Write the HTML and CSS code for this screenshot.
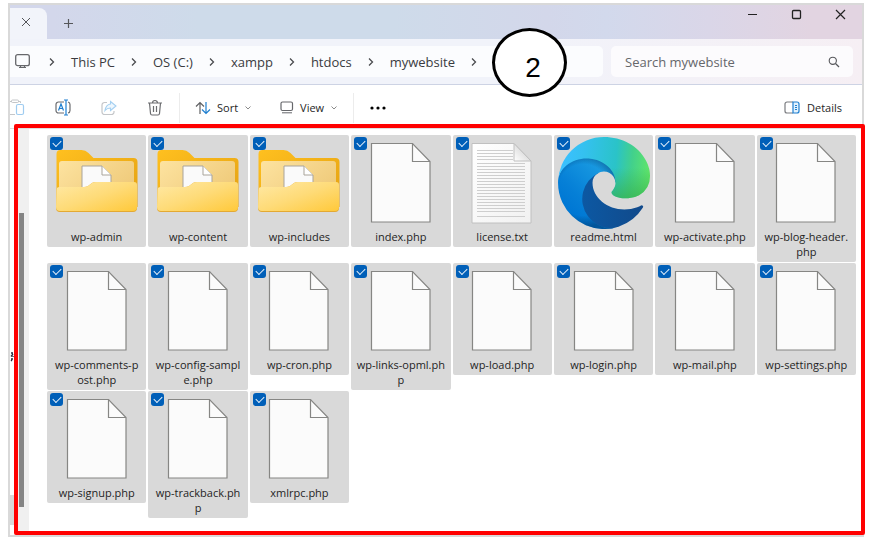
FILE: index.html
```html
<!DOCTYPE html>
<html lang="en">
<head>
<meta charset="utf-8">
<title>mywebsite</title>
<link rel="stylesheet" href="styles.css">
</head>
<body>
<svg class="defs" width="0" height="0" aria-hidden="true">
  <defs>
    <linearGradient id="gBack" x1="0" y1="0" x2="1" y2="1"><stop offset="0" stop-color="#ffc01f"/><stop offset="1" stop-color="#e3a012"/></linearGradient>
    <linearGradient id="gInner" x1="0" y1="0" x2="1" y2="0.6"><stop offset="0" stop-color="#fde3a0"/><stop offset="1" stop-color="#efca7a"/></linearGradient>
    <linearGradient id="gFront" x1="0" y1="0" x2="1" y2="1"><stop offset="0" stop-color="#ffe9a6"/><stop offset="0.5" stop-color="#fedb78"/><stop offset="1" stop-color="#ffc93a"/></linearGradient>
    <linearGradient id="gText" x1="0" y1="0" x2="1" y2="1"><stop offset="0" stop-color="#ffffff"/><stop offset="1" stop-color="#f1f1f1"/></linearGradient>
    <linearGradient id="gFold" x1="0" y1="1" x2="1" y2="0"><stop offset="0" stop-color="#ffffff"/><stop offset="0.6" stop-color="#dcdcdc"/></linearGradient>
    <linearGradient id="eDeep" gradientUnits="userSpaceOnUse" x1="63" y1="178" x2="241" y2="178"><stop offset="0" stop-color="#0c59a4"/><stop offset="1" stop-color="#114a8b"/></linearGradient>
    <linearGradient id="eBlue" gradientUnits="userSpaceOnUse" x1="150" y1="100" x2="46" y2="212"><stop offset="0" stop-color="#1b9de2"/><stop offset="0.2" stop-color="#1595df"/><stop offset="0.7" stop-color="#0680d7"/><stop offset="1" stop-color="#0078d4"/></linearGradient>
    <radialGradient id="eShade" gradientUnits="userSpaceOnUse" cx="75" cy="152" r="102"><stop offset="0.7" stop-color="#003060" stop-opacity="0"/><stop offset="1" stop-color="#003060" stop-opacity="0.5"/></radialGradient>
    <linearGradient id="eTop" gradientUnits="userSpaceOnUse" x1="15" y1="90" x2="262" y2="110"><stop offset="0" stop-color="#3bc0ff"/><stop offset="0.25" stop-color="#34c1ee"/><stop offset="0.6" stop-color="#2ac3c8"/><stop offset="0.78" stop-color="#42d08c"/><stop offset="1" stop-color="#62e768"/></linearGradient>
    <linearGradient id="eGreen" gradientUnits="userSpaceOnUse" x1="200" y1="90" x2="200" y2="176"><stop offset="0" stop-color="#36b04a" stop-opacity="0"/><stop offset="1" stop-color="#36b04a" stop-opacity="0.7"/></linearGradient>
  </defs>
  <symbol id="folder" viewBox="0 0 92 92">
    <path d="M5.500 17q0-4 4-4h21q4 0 7 3l5 5h40q4 0 4 4v45H5.500z" fill="url(#gBack)"/>
    <path d="M8 27q0-3 3-3h69q3 0 3 3v36H8z" fill="url(#gInner)"/>
    <path d="M31 29h20l9 9v20H31z" fill="#fafafa" stroke="#a9a49b" stroke-width="1"/>
    <path d="M51 29v9h9" fill="#fff" stroke="#a9a49b" stroke-width="1"/>
    <path d="M5.500 53q0-3 3-3H33q2 0 4-1l4-3q1-1 4-1h38q3 0 3 3v23q0 4-4 4h-73q-4 0-4-4z" fill="#e3a933"/>
    <path d="M5.500 53q0-3 3-3H33q2 0 4-1l4-3q1-1 4-1h38q3 0 3 3v22q0 4-4 4h-73q-4 0-4-4z" fill="url(#gFront)"/>
  </symbol>
  <symbol id="file" viewBox="0 0 92 92">
    <path d="M16.500 6.500h41l17.500 18v60.500h-58.500z" fill="#fbfbfb" stroke="#868684" stroke-width="1.200"/>
    <path d="M57.500 6.500v18H75" fill="none" stroke="#868684" stroke-width="1.200"/>
  </symbol>
  <symbol id="text" viewBox="0 0 92 92">
    <path d="M16 6.500h42l17 17.500v62H16z" fill="url(#gText)" stroke="#c0c0c0" stroke-width="1"/>
    <path d="M21 13.500h36M21 16.500h36M21 19.500h36M21 22.500h36M21 26.500h48M21 29.500h48M21 32.500h48M21 35.500h48M21 38.500h48M21 41.500h48M21 44.500h48M21 47.500h48M21 50.500h48M21 53.500h48M21 56.500h48M21 59.500h48M21 62.500h48M21 65.500h48M21 68.500h48M21 71.500h48M21 74.500h48M21 79.500h48" stroke="#cecece" stroke-width="1"/>
    <path d="M58 6.500V24h17z" fill="url(#gFold)" stroke="#c0c0c0" stroke-width="1"/>
  </symbol>
  <symbol id="edge" viewBox="0 0 256 256">
    <g transform="translate(-4.630 -4.920)">
      <path d="M235.680 195.460a93.730 93.730 0 0 1-10.540 4.710 101.870 101.870 0 0 1-35.900 6.460c-47.320 0-88.540-32.550-88.540-74.320A31.480 31.480 0 0 1 117.130 105c-42.800 1.800-53.800 46.400-53.800 72.530 0 73.880 68.090 81.370 82.760 81.370 7.910 0 19.840-2.300 27-4.560l1.310-.44a128.340 128.340 0 0 0 66.600-52.800 4 4 0 0 0-5.320-5.640z" fill="url(#eDeep)"/>
      <path d="M110.340 246.340A79.200 79.200 0 0 1 87.600 225a80.720 80.720 0 0 1 29.530-120c3.120-1.470 8.450-4.130 15.540-4a32.350 32.350 0 0 1 25.690 13 31.880 31.880 0 0 1 6.360 18.660c0-.21 24.460-79.600-80-79.600-43.900 0-80 41.660-80 78.210a130.150 130.150 0 0 0 12.110 56 128 128 0 0 0 156.380 67.110 75.550 75.550 0 0 1-62.780-8z" fill="url(#eBlue)"/>
      <path d="M110.340 246.340A79.200 79.200 0 0 1 87.600 225a80.720 80.720 0 0 1 29.530-120c3.120-1.470 8.450-4.130 15.540-4a32.350 32.350 0 0 1 25.690 13 31.880 31.880 0 0 1 6.360 18.660c0-.21 24.460-79.600-80-79.600-43.900 0-80 41.660-80 78.210a130.150 130.150 0 0 0 12.110 56 128 128 0 0 0 156.380 67.110 75.550 75.550 0 0 1-62.780-8z" fill="url(#eShade)"/>
      <path d="M156.940 153.780c-.81 1.050-3.300 2.500-3.300 5.660 0 2.610 1.700 5.120 4.720 7.230 14.380 10 41.490 8.680 41.560 8.680a59.560 59.560 0 0 0 30.270-8.350 61.380 61.380 0 0 0 30.430-52.880c.26-22.410-8-37.310-11.340-43.910C228.090 28.760 182.350 4.920 132.610 4.920a128 128 0 0 0-128 126.200c.48-36.540 36.800-66.050 80-66.050 3.500 0 23.460.34 42 10.070 16.340 8.580 24.900 18.940 30.850 29.210 6.180 10.670 7.280 24.150 7.280 29.520s-2.740 13.330-7.800 19.910z" fill="url(#eTop)"/>
      <path d="M156.940 153.780c-.81 1.050-3.300 2.500-3.300 5.660 0 2.610 1.700 5.120 4.720 7.230 14.380 10 41.490 8.680 41.560 8.680a59.560 59.560 0 0 0 30.270-8.350 61.380 61.380 0 0 0 30.430-52.880V90H150q14 20 14.740 43.870c0 5.370-2.740 13.330-7.800 19.910z" fill="url(#eGreen)"/>
    </g>
  </symbol>
  <symbol id="chev" viewBox="0 0 6 10"><path d="M1 1.500l3.500 3.500L1 8.500" fill="none" stroke="#4a4b4f" stroke-width="1.300"/></symbol>
  <symbol id="down" viewBox="0 0 8 8"><path d="M1.500 2.500L4 5l2.500-2.500" fill="none" stroke="#8a8a8a" stroke-width="1"/></symbol>
</svg>

<div class="window">
  <header class="titlebar">
    <div class="tab"><button class="plain" aria-label="Close tab"><svg width="10" height="10"><path d="M1 1l8 8M9 1L1 9" stroke="#55565a" fill="none"/></svg></button></div>
    <button class="plain newtab" aria-label="New tab"><svg width="11" height="11"><path d="M5.500 1v9M1 5.500h9" stroke="#55565a" stroke-width="1.200" fill="none"/></svg></button>
    <div class="controls">
      <button class="plain" aria-label="Minimize"><svg width="11" height="11"><path d="M1 5.500h9" stroke="#222"/></svg></button>
      <button class="plain" aria-label="Maximize"><svg width="11" height="11"><rect x="1.500" y="1.500" width="8" height="8" rx="1" stroke="#222" stroke-width="1.300" fill="none"/></svg></button>
      <button class="plain" aria-label="Close"><svg width="11" height="11"><path d="M1 1l9 9M10 1l-9 9" stroke="#222" stroke-width="1.200"/></svg></button>
    </div>
  </header>

  <div class="address-row">
    <nav class="address" aria-label="Path">
      <svg class="device" width="15" height="15"><rect x="0.700" y="0.700" width="13.600" height="11" rx="2" fill="none" stroke="#66676b" stroke-width="1.300"/><path d="M4 13.500h7M5.500 12v2M9.500 12v2" stroke="#66676b" stroke-width="1.200"/></svg>
      <svg class="chev"><use href="#chev"/></svg>
      <button class="plain">This PC</button>
      <svg class="chev"><use href="#chev"/></svg>
      <button class="plain">OS (C:)</button>
      <svg class="chev"><use href="#chev"/></svg>
      <button class="plain">xampp</button>
      <svg class="chev"><use href="#chev"/></svg>
      <button class="plain">htdocs</button>
      <svg class="chev"><use href="#chev"/></svg>
      <button class="plain">mywebsite</button>
      <svg class="chev"><use href="#chev"/></svg>
    </nav>
    <div class="search">
      <input type="search" placeholder="Search mywebsite" aria-label="Search mywebsite">
      <svg width="12" height="12"><circle cx="4.800" cy="4.800" r="3.600" fill="none" stroke="#55565a" stroke-width="1.100"/><path d="M7.500 7.500l3.500 3.500" stroke="#55565a" stroke-width="1.200"/></svg>
    </div>
  </div>

  <div class="toolbar">
    <button class="plain tool paste" aria-label="Paste"><svg width="15" height="17"><path d="M0 2.500h2M8 2.500h2.500V4M0 15.500h5" stroke="#c4c6c9" fill="none"/><rect x="1.500" y="1" width="7" height="2.500" rx="1" fill="none" stroke="#c4c6c9"/><rect x="6.500" y="5.500" width="7" height="10" rx="1.500" fill="#fff" stroke="#9fccf0" stroke-width="1.200"/></svg></button>
    <button class="plain tool" aria-label="Rename"><svg width="16" height="17"><path d="M9 3H3.500a2.500 2.500 0 0 0-2.500 2.500v6A2.500 2.500 0 0 0 3.500 14H9M13 3a2.500 2.500 0 0 1 2 2.500v6a2.500 2.500 0 0 1-2 2.500" fill="none" stroke="#6c6d70" stroke-width="1.200"/><path d="M3.500 11.500l2.500-6.500 2.500 6.500M4.500 9.500h3M9 1h4M11 1v15M9 16h4" fill="none" stroke="#1e7fd0" stroke-width="1.200"/></svg></button>
    <button class="plain tool" aria-label="Share"><svg width="16" height="16"><path d="M6 2.500H3.500A2.500 2.500 0 0 0 1 5v7a2.500 2.500 0 0 0 2.500 2.500h7A2.500 2.500 0 0 0 13 12v-1" fill="none" stroke="#c4c6c9" stroke-width="1.200"/><path d="M9.500 1.500L15 6l-5.500 4.500V8Q6 8 4 10.500 5 4.500 9.500 4z" fill="#eef7fe" stroke="#a5d0f1" stroke-width="1.100"/></svg></button>
    <button class="plain tool" aria-label="Delete"><svg width="16" height="17"><path d="M1 4h14M5.500 4a2.500 2.500 0 0 1 5 0M2.500 4l1 10.500q.2 1.500 1.500 1.500h6q1.300 0 1.500-1.500l1-10.500M6.500 7v6M9.500 7v6" fill="none" stroke="#6c6d70" stroke-width="1.200"/></svg></button>
    <span class="rule"></span>
    <button class="plain menu"><svg width="16" height="14"><path d="M5 13V1.500M1 5.500l4-4 4 4" fill="none" stroke="#5f6063" stroke-width="1.200"/><path d="M11 1v11.500M7 8.500l4 4 4-4" fill="none" stroke="#1e7fd0" stroke-width="1.200"/></svg><span>Sort</span><svg class="down"><use href="#down"/></svg></button>
    <button class="plain menu"><svg width="14" height="13"><rect x="1" y="1" width="11.500" height="8.500" rx="1.500" fill="none" stroke="#66676b" stroke-width="1.200"/><path d="M2 11.800h10" stroke="#66676b"/></svg><span>View</span><svg class="down"><use href="#down"/></svg></button>
    <span class="rule"></span>
    <button class="plain menu" aria-label="More"><svg width="18" height="4"><circle cx="3" cy="2" r="1.600"/><circle cx="9" cy="2" r="1.600"/><circle cx="15" cy="2" r="1.600"/></svg></button>
    <button class="plain details"><svg width="16" height="13"><path d="M9 1H3a2 2 0 0 0-2 2v7a2 2 0 0 0 2 2h6" fill="none" stroke="#7b7c80" stroke-width="1.200"/><path d="M9 1h4a2 2 0 0 1 2 2v7a2 2 0 0 1-2 2H9z" fill="#e3f2fd" stroke="#1e7fd0" stroke-width="1.200"/><path d="M11 4.500h2M11 6.500h2M11 8.500h2" stroke="#1e7fd0"/></svg><span>Details</span></button>
  </div>

  <main class="content">
    <div class="navpane">
      <svg width="4" height="10"><path d="M1 1h2M3 2L1 4.500M3 4v1M1 7h2M1 9l1-1" stroke="#222a3c" stroke-width="1.300" fill="none"/></svg>
      <span class="current"></span>
    </div>
    <div class="gutter"><span class="thumb"></span></div>
    <div class="files">
      <label class="item"><input type="checkbox" checked><svg><use href="#folder"/></svg><span>wp-admin</span></label>
      <label class="item"><input type="checkbox" checked><svg><use href="#folder"/></svg><span>wp-content</span></label>
      <label class="item"><input type="checkbox" checked><svg><use href="#folder"/></svg><span>wp-includes</span></label>
      <label class="item"><input type="checkbox" checked><svg><use href="#file"/></svg><span>index.php</span></label>
      <label class="item"><input type="checkbox" checked><svg><use href="#text"/></svg><span>license.txt</span></label>
      <label class="item"><input type="checkbox" checked><svg><use href="#edge"/></svg><span>readme.html</span></label>
      <label class="item"><input type="checkbox" checked><svg><use href="#file"/></svg><span>wp-activate.php</span></label>
      <label class="item"><input type="checkbox" checked><svg><use href="#file"/></svg><span>wp-blog-header.<br>php</span></label>
      <label class="item"><input type="checkbox" checked><svg><use href="#file"/></svg><span>wp-comments-p<br>ost.php</span></label>
      <label class="item"><input type="checkbox" checked><svg><use href="#file"/></svg><span>wp-config-sampl<br>e.php</span></label>
      <label class="item"><input type="checkbox" checked><svg><use href="#file"/></svg><span>wp-cron.php</span></label>
      <label class="item"><input type="checkbox" checked><svg><use href="#file"/></svg><span>wp-links-opml.ph<br>p</span></label>
      <label class="item"><input type="checkbox" checked><svg><use href="#file"/></svg><span>wp-load.php</span></label>
      <label class="item"><input type="checkbox" checked><svg><use href="#file"/></svg><span>wp-login.php</span></label>
      <label class="item"><input type="checkbox" checked><svg><use href="#file"/></svg><span>wp-mail.php</span></label>
      <label class="item"><input type="checkbox" checked><svg><use href="#file"/></svg><span>wp-settings.php</span></label>
      <label class="item"><input type="checkbox" checked><svg><use href="#file"/></svg><span>wp-signup.php</span></label>
      <label class="item"><input type="checkbox" checked><svg><use href="#file"/></svg><span>wp-trackback.ph<br>p</span></label>
      <label class="item"><input type="checkbox" checked><svg><use href="#file"/></svg><span>xmlrpc.php</span></label>
    </div>
    <div class="highlight"></div>
  </main>
  <div class="step">2</div>
</div>
</body>
</html>
```
FILE: styles.css
```css
* { box-sizing: border-box; }

body {
  margin: 0;
  padding: 3px 7px 2px 8px;
  min-height: 100vh;
  display: flex;
  background: #fff;
  font-family: "Open Sans", "Noto Sans", sans-serif;
  font-size: 11px;
  color: #1f1f1f;
}

svg { display: block; flex: none; }
.defs { position: absolute; }

.window {
  position: relative;
  flex: 1;
  display: flex;
  flex-direction: column;
  border: 2px solid #d9d9d9;
}

.plain {
  display: flex;
  align-items: center;
  justify-content: center;
  padding: 0;
  border: 0;
  background: none;
  font: inherit;
  color: inherit;
  white-space: nowrap;
}

/* Title bar */
.titlebar {
  display: flex;
  height: 34px;
  background: linear-gradient(90deg, #d3d7eb 5%, #cedbea 22%, #cedbea 45%, #d3d7ea 63%, #d2d9ec 70%, #dad6e8 82%, #e2d4e1 94%);
}
.tab {
  display: flex;
  align-items: center;
  justify-content: center;
  width: 37px;
  margin-top: 3px;
  padding: 0 5px 3px 0;
  background: #f2f4fa;
  border-top-right-radius: 8px;
}
.newtab { width: 43px; padding-top: 3px; }
.controls { display: flex; height: 19px; margin-left: auto; }
.controls .plain { width: 44px; }

/* Address bar and search */
.address-row {
  display: flex;
  gap: 8px;
  padding: 7px 9px 7px 0;
  background: linear-gradient(90deg, #f1f3fa 60%, #f6eff4);
  border-bottom: 1px solid #cdd3e4;
  font-size: 13px;
  color: #3a3b3f;
}
.address {
  flex: 1;
  display: flex;
  align-items: center;
  gap: 16px;
  height: 31px;
  padding-left: 5px;
  background: #fbfcfe;
  border-radius: 0 5px 5px 0;
}
.device { margin-right: 3px; }
.chev { width: 6px; height: 10px; }
.search {
  display: flex;
  align-items: center;
  width: 242px;
  padding: 0 13px 0 14px;
  background: #fcfbfd;
  border-radius: 5px;
}
.search input {
  flex: 1;
  min-width: 0;
  padding: 0;
  border: 0;
  outline: 0;
  background: none;
  font: inherit;
}
.search input::placeholder { color: #66676b; opacity: 1; }

/* Command bar */
.toolbar {
  display: flex;
  align-items: center;
  height: 44px;
  padding-top: 2px;
  border-bottom: 1px solid #dfdfdf;
}
.tool { width: 46px; }
.paste { width: 30px; justify-content: flex-start; }
.rule { width: 1px; height: 30px; margin: 0 1px; background: #ececec; }
.menu { gap: 6px; padding: 0 14px; }
.down { width: 8px; height: 8px; }
.details { gap: 7px; margin-left: auto; padding-right: 20px; }

/* File area */
.content {
  position: relative;
  flex: 1;
  display: flex;
}
.navpane {
  width: 8px;
  display: flex;
  flex-direction: column;
  justify-content: flex-end;
}
.current { height: 30px; margin: 133px 0 10px; background: #d9d9d9; }
.gutter { width: 11px; padding: 84px 0 28px 1px; background: #f0f0f0; }
.thumb { display: block; width: 5px; height: 100%; background: #858585; }
.files {
  flex: 1;
  display: grid;
  grid-template-columns: repeat(8, minmax(0, 1fr));
  gap: 1px 2px;
  align-items: start;
  align-content: start;
  padding: 6px 6px 16px 18px;
}
.item {
  position: relative;
  display: flex;
  flex-direction: column;
  align-items: center;
  padding: 2px 0 3px;
  background: #d9d9d9;
  border-radius: 2px;
  line-height: 15px;
  text-align: center;
  white-space: nowrap;
}
.item svg { width: 92px; height: 92px; }
.item input {
  appearance: none;
  position: absolute;
  top: 2px;
  left: 3px;
  width: 13px;
  height: 13px;
  margin: 0;
  background: #005fb8;
  border-radius: 3px;
}
.item input::after {
  content: "";
  position: absolute;
  left: 3px;
  top: 3px;
  width: 7px;
  height: 4px;
  border: solid #e6f1fb;
  border-width: 0 0 1px 1px;
  transform: rotate(-45deg);
}

/* Annotations */
.highlight {
  position: absolute;
  inset: -5px -3px 0 4px;
  border: 4px solid #f00;
  border-radius: 2px;
  pointer-events: none;
}
.step {
  position: absolute;
  left: 482px;
  top: 23px;
  display: flex;
  align-items: center;
  justify-content: center;
  width: 75px;
  height: 69px;
  padding: 10px 0 0 7px;
  border: 3px solid #000;
  border-radius: 50%;
  background: #fff;
  font: 28px "Liberation Sans", sans-serif;
  color: #000;
}
```
